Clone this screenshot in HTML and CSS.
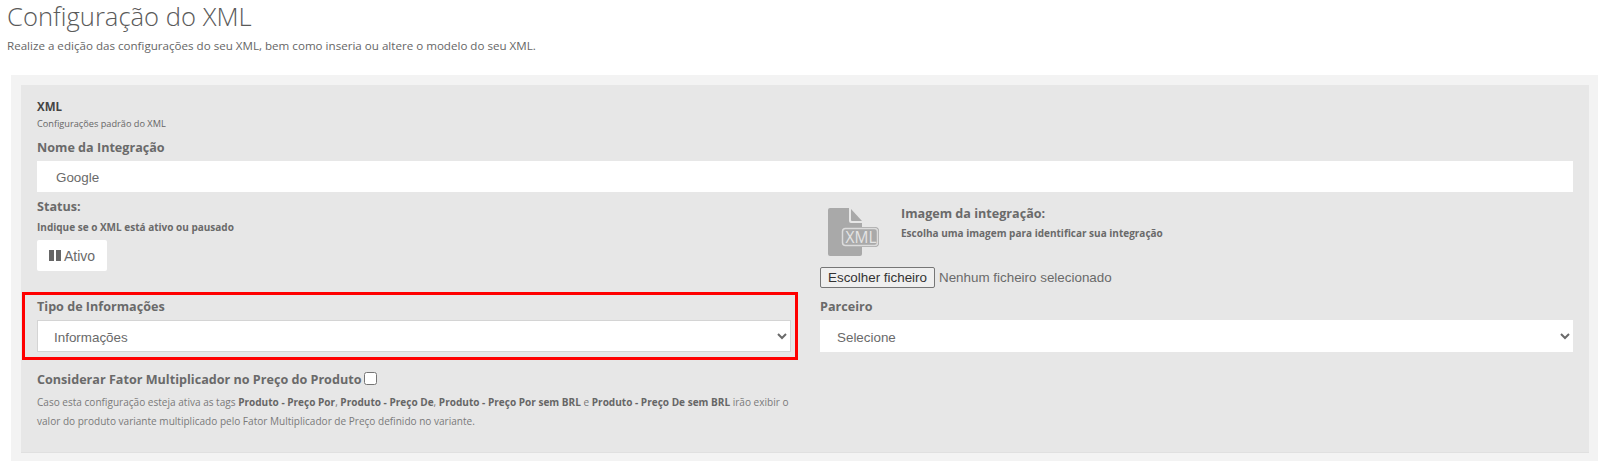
FILE: index.html
```html
<!DOCTYPE html>
<html lang="pt">
<head>
<meta charset="utf-8">
<title>Configuração do XML</title>
<link rel="stylesheet" href="styles.css">
</head>
<body>
<header class="page-head">
  <h1 class="page-title">Configuração do XML</h1>
  <p class="page-sub">Realize a edição das configurações do seu XML, bem como inseria ou altere o modelo do seu XML.</p>
</header>
<main class="outer">
  <section class="inner">
    <h2 class="sec-title">XML</h2>
    <p class="sec-sub">Configurações padrão do XML</p>
    <label class="label label-name">Nome da Integração</label>
    <input class="control" type="text" value="Google">
    <div class="columns">
      <div class="col-status">
        <div class="label">Status:</div>
        <p class="hint">Indique se o XML está ativo ou pausado</p>
        <button class="status-btn" type="button"><span class="pause"><i></i><i></i></span>Ativo</button>
      </div>
      <div class="col-image">
        <div class="image-row">
          <svg class="xml-icon" width="52" height="49" viewBox="0 0 52 49" aria-hidden="true">
            <path fill="#a9a9a9" d="M2 0H21V13a2 2 0 0 0 2 2H34V46a2 2 0 0 1-2 2H2a2 2 0 0 1-2-2V2A2 2 0 0 1 2 0Z"/>
            <path fill="#a9a9a9" d="M23 1 34 13H24a1 1 0 0 1-1-1Z"/>
            <rect x="13" y="19" width="38" height="20" rx="4" fill="#a9a9a9"/>
            <rect x="14.5" y="20.5" width="35" height="17" rx="3" fill="none" stroke="#dcdcdc" stroke-width="1.5"/>
            <text x="33" y="35" text-anchor="middle" class="xml-text">XML</text>
          </svg>
          <div class="image-text">
            <div class="label">Imagem da integração:</div>
            <p class="hint">Escolha uma imagem para identificar sua integração</p>
          </div>
        </div>
        <div class="file-row">
          <button class="file-btn" type="button">Escolher ficheiro</button>
          <span class="file-name">Nenhum ficheiro selecionado</span>
        </div>
      </div>
      <div class="group-marked">
        <label class="label">Tipo de Informações</label>
        <select class="control select select-bordered"><option>Informações</option></select>
      </div>
      <div class="group-partner">
        <label class="label">Parceiro</label>
        <select class="control select"><option>Selecione</option></select>
      </div>
    </div>
    <div class="factor">
      <div class="factor-head">
        <label class="label">Considerar Fator Multiplicador no Preço do Produto</label>
        <input class="check" type="checkbox">
      </div>
      <p class="factor-text">Caso esta configuração esteja ativa as tags <b>Produto - Preço Por</b>, <b>Produto - Preço De</b>, <b>Produto - Preço Por sem BRL</b> e <b>Produto - Preço De sem BRL</b> irão exibir o valor do produto variante multiplicado pelo Fator Multiplicador de Preço definido no variante.</p>
    </div>
  </section>
</main>
</body>
</html>
```
FILE: styles.css
```css
* { box-sizing: border-box; }
html, body { margin: 0; padding: 0; background: #fff; }
body {
  font-family: "Open Sans", sans-serif;
  color: #666;
  height: 461px;
  overflow: hidden;
}
.page-head { padding: 0 7px; height: 75px; }
.page-title {
  margin: 0;
  font-size: 25.6px;
  font-weight: 300;
  line-height: 33px;
  color: #5a5a5a;
}
.page-sub {
  margin: 4px 0 0;
  font-size: 11.6px;
  line-height: 18px;
  color: #666;
}
.outer {
  margin: 0 2px 0 11px;
  height: 386px;
  padding: 10px 9px 0 10px;
  background: #f3f3f3;
}
.inner {
  height: 368px;
  padding: 14px 16px 0 16px;
  background: #e7e7e7;
  border-bottom: 1px solid #e0e0e0;
}
.sec-title {
  margin: 0;
  font-size: 11.5px;
  font-weight: 700;
  line-height: 16px;
  color: #444;
}
.sec-sub {
  margin: 2px 0 0;
  font-size: 9.2px;
  line-height: 14px;
  color: #666;
}
.label {
  display: block;
  font-size: 12.6px;
  font-weight: 700;
  line-height: 17px;
  color: #6a6a6a;
}
.label-name { margin-top: 8px; margin-bottom: 5px; }
.control {
  display: block;
  width: 100%;
  height: 31px;
  padding: 2px 19px 0;
  border: 0;
  background: #fff;
  font-family: "Liberation Sans", sans-serif;
  font-size: 13.4px;
  color: #6a6a6a;
  border-radius: 0;
}
.columns {
  display: grid;
  grid-template-columns: 754px 1fr;
  column-gap: 29px;
}
.col-status { padding-top: 6px; height: 100px; }
.hint {
  margin: 5px 0 0;
  font-size: 10px;
  font-weight: 700;
  line-height: 14px;
  color: #6a6a6a;
}
.status-btn {
  display: flex;
  align-items: center;
  gap: 3px;
  width: 70px;
  height: 31px;
  margin-top: 6px;
  padding: 0 0 0 12px;
  border: 0;
  border-radius: 2px;
  background: #fff;
  font-family: "Liberation Sans", sans-serif;
  font-size: 14px;
  color: #6a6a6a;
}
.pause { display: flex; gap: 2px; }
.pause i { display: block; width: 5px; height: 11px; background: #666; }
.col-image { height: 100px; padding-top: 16px; }
.image-row { display: flex; padding-left: 8px; height: 58px; }
.xml-icon { flex: none; display: block; }
.xml-text {
  font-family: "Open Sans", sans-serif;
  font-size: 15.5px;
  fill: #e4e4e4;
}
.image-text { margin-left: 21px; margin-top: -3px; }
.image-text .hint { margin-top: 4px; }
.file-row { display: flex; align-items: center; height: 21px; margin-top: 1px; }
.file-btn {
  width: 115px;
  height: 21px;
  padding: 0;
  border: 1px solid #767676;
  border-radius: 2px;
  background: #efefef;
  font-family: "Liberation Sans", sans-serif;
  font-size: 13.4px;
  color: #333;
}
.file-name {
  margin-left: 4px;
  font-family: "Liberation Sans", sans-serif;
  font-size: 13.4px;
  color: #6a6a6a;
}
.group-marked {
  margin: 0 -7px 0 -15px;
  padding: 3px 4px 5px 12px;
  border: 3px solid #f00;
  height: 68px;
}
.group-partner { padding-top: 6px; }
.label + .select { margin-top: 5px; }
.select { height: 32px; padding: 2px 0 0 13px; }
.select-bordered { padding-left: 12px; border: 1px solid #d4d4d4; }
.factor { padding-top: 11px; }
.factor-head { display: flex; align-items: center; gap: 3px; }
.check { width: 13px; height: 13px; margin: 0 0 3px; }
.factor-text {
  margin: 5px 0 0;
  width: 754px;
  font-size: 10.05px;
  line-height: 18.5px;
  color: #7a7a7a;
}
.factor-text b { color: #666; }
```
